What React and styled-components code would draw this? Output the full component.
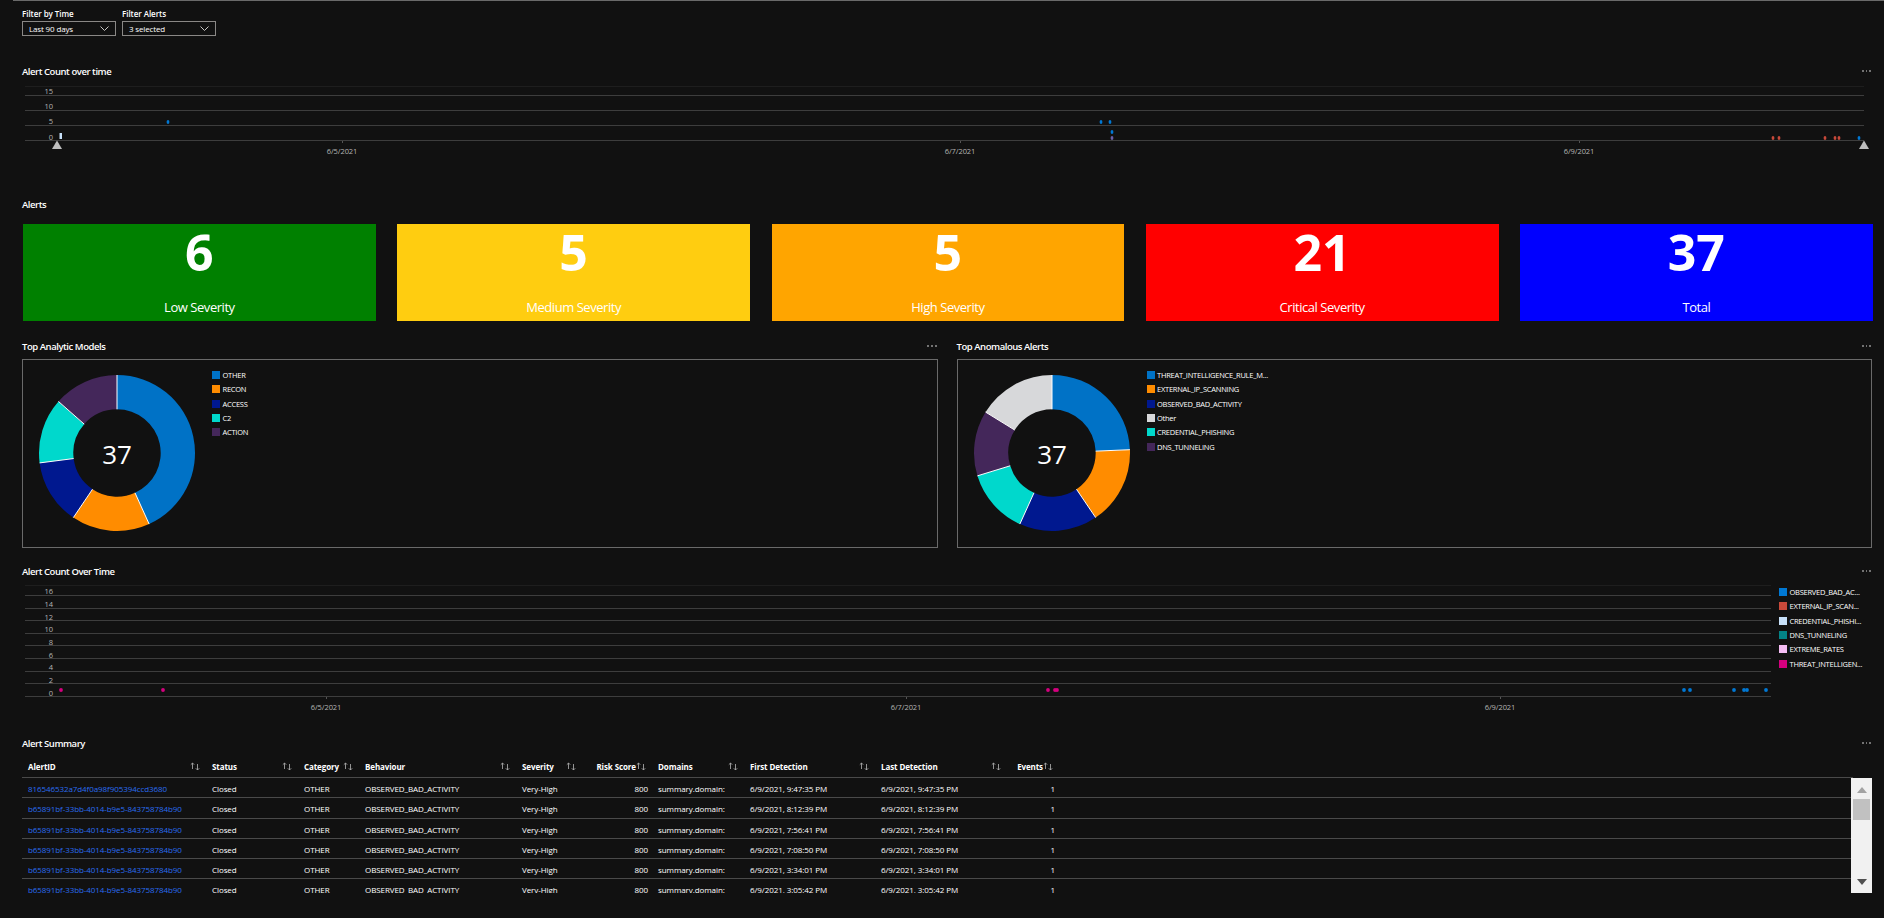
import React from "react";
import styled, { createGlobalStyle } from "styled-components";

const COLORS = {
  blue: "#0072c6",
  orange: "#ff8c00",
  navy: "#00188f",
  teal: "#00d8cc",
  purple: "#44275a",
  grey: "#d7d8da",
};

const MODELS = [
  { label: "OTHER", value: 16, color: COLORS.blue },
  { label: "RECON", value: 6, color: COLORS.orange },
  { label: "ACCESS", value: 5, color: COLORS.navy },
  { label: "C2", value: 5, color: COLORS.teal },
  { label: "ACTION", value: 5, color: COLORS.purple },
];

const ANOMALIES = [
  { label: "THREAT_INTELLIGENCE_RULE_M...", value: 9, color: COLORS.blue },
  { label: "EXTERNAL_IP_SCANNING", value: 6, color: COLORS.orange },
  { label: "OBSERVED_BAD_ACTIVITY", value: 6, color: COLORS.navy },
  { label: "CREDENTIAL_PHISHING", value: 5, color: COLORS.teal },
  { label: "DNS_TUNNELING", value: 5, color: COLORS.purple },
  { label: "Other", value: 6, color: COLORS.grey },
];

const ANOMALY_LEGEND = [0, 1, 2, 5, 3, 4].map((i) => ANOMALIES[i]);

const TIME_LEGEND = [
  { label: "OBSERVED_BAD_AC...", color: "#0078d4" },
  { label: "EXTERNAL_IP_SCAN...", color: "#c8493a" },
  { label: "CREDENTIAL_PHISHI...", color: "#c7e0f9" },
  { label: "DNS_TUNNELING", color: "#038387" },
  { label: "EXTREME_RATES", color: "#f4bdf4" },
  { label: "THREAT_INTELLIGEN...", color: "#d5007f" },
];

const CARDS = [
  { count: 6, label: "Low Severity", color: "#008000" },
  { count: 5, label: "Medium Severity", color: "#ffcd10" },
  { count: 5, label: "High Severity", color: "#ffa500" },
  { count: 21, label: "Critical Severity", color: "#ff0000" },
  { count: 37, label: "Total", color: "#0000ff" },
];

const COLUMNS = [
  { title: "AlertID" },
  { title: "Status" },
  { title: "Category" },
  { title: "Behaviour" },
  { title: "Severity" },
  { title: "Risk Score", numeric: true },
  { title: "Domains" },
  { title: "First Detection" },
  { title: "Last Detection" },
  { title: "Events", numeric: true },
];

const LONG_ID = "b65891bf-33bb-4014-b9e5-843758784b90";
const ROWS = [
  ["816546532a7d4f0a98f905394ccd3680", "9:47:35 PM"],
  [LONG_ID, "8:12:39 PM"],
  [LONG_ID, "7:56:41 PM"],
  [LONG_ID, "7:08:50 PM"],
  [LONG_ID, "3:34:01 PM"],
  [LONG_ID, "3:05:42 PM"],
];

const TOP_CHART = {
  box: [22, 84, 1850, 76],
  right: 1864,
  lines: [95, 110, 125, 140],
  faint: 86,
  dot: [1.4, 1.9],
  ticks: [
    ["15", 91],
    ["10", 106],
    ["5", 121],
    ["0", 136.5],
  ],
  dates: [
    [342, 150.5, "6/5/2021"],
    [960, 150.5, "6/7/2021"],
    [1579, 150.5, "6/9/2021"],
  ],
  dots: [
    [168, 122, "#0078d4"],
    [1101, 122, "#0078d4"],
    [1110, 122, "#0078d4"],
    [1112, 132, "#0078d4"],
    [1112, 138, "#6b5fa8"],
    [1773, 138, "#c8493a"],
    [1779, 138, "#c8493a"],
    [1825, 138, "#c8493a"],
    [1835, 138, "#c8493a"],
    [1839, 138, "#c8493a"],
    [1859, 138, "#0078d4"],
  ],
  handles: [57, 1864],
};

const BOTTOM_CHART = {
  box: [22, 584, 1750, 132],
  right: 1771,
  lines: [595, 608, 620, 633, 645, 658, 671, 683, 696],
  faint: 585,
  dot: [1.9, 1.9],
  ticks: [
    ["16", 591],
    ["14", 604],
    ["12", 617],
    ["10", 629],
    ["8", 642],
    ["6", 655],
    ["4", 667],
    ["2", 679.5],
    ["0", 692.5],
  ],
  dates: [
    [326, 706.5, "6/5/2021"],
    [906, 706.5, "6/7/2021"],
    [1500, 706.5, "6/9/2021"],
  ],
  dots: [
    [61, 690, "#d5007f"],
    [163, 690, "#d5007f"],
    [1048, 690, "#d5007f"],
    [1055, 690, "#d5007f"],
    [1057, 690, "#d5007f"],
    [1684, 690, "#0078d4"],
    [1690, 690, "#0078d4"],
    [1734, 690, "#0078d4"],
    [1744, 690, "#0078d4"],
    [1747, 690, "#0078d4"],
    [1766, 690, "#0078d4"],
  ],
  handles: [],
};

const polar = (r, turn) => {
  const a = turn * 2 * Math.PI;
  return [80 + r * Math.sin(a), 80 - r * Math.cos(a)];
};

const Donut = ({ slices }) => {
  const total = slices.reduce((sum, s) => sum + s.value, 0);
  let run = 0;
  const parts = slices.map((s) => {
    const from = run / total;
    run += s.value;
    const to = run / total;
    const big = to - from > 0.5 ? 1 : 0;
    const [x1, y1] = polar(78, from);
    const [x2, y2] = polar(78, to);
    const [x3, y3] = polar(43.7, to);
    const [x4, y4] = polar(43.7, from);
    return {
      color: s.color,
      from,
      d: `M${x1} ${y1}A78 78 0 ${big} 1 ${x2} ${y2}L${x3} ${y3}A43.7 43.7 0 ${big} 0 ${x4} ${y4}Z`,
    };
  });
  return (
    <DonutSvg width="160" height="160" viewBox="0 0 160 160">
      {parts.map((p) => (
        <path key={p.from} d={p.d} fill={p.color} />
      ))}
      {parts.map((p) => {
        const [x1, y1] = polar(43.7, p.from);
        const [x2, y2] = polar(78, p.from);
        return <line key={p.from} x1={x1} y1={y1} x2={x2} y2={y2} stroke="#fff" strokeWidth="1" />;
      })}
      <DonutTotal x="80" y="81" textAnchor="middle" dominantBaseline="central">
        {total}
      </DonutTotal>
    </DonutSvg>
  );
};

const TimeChart = ({ data }) => {
  const axis = data.lines[data.lines.length - 1];
  return (
    <ChartSvg width={data.box[2]} height={data.box[3]} viewBox={data.box.join(" ")}>
      <line x1="25" x2={data.right} y1={data.faint + 0.5} y2={data.faint + 0.5} stroke="#1e1e1e" />
      {data.lines.map((y) => (
        <line key={y} x1="25" x2={data.right} y1={y + 0.5} y2={y + 0.5} stroke="#3d3d3d" />
      ))}
      {data.ticks.map(([label, y]) => (
        <AxisText key={label} x="53" y={y} textAnchor="end" dominantBaseline="central">
          {label}
        </AxisText>
      ))}
      {data.dates.map(([x, y, label]) => (
        <g key={label}>
          <line x1={x + 0.5} x2={x + 0.5} y1={axis + 1} y2={axis + 3} stroke="#555" />
          <AxisText x={x} y={y} textAnchor="middle" dominantBaseline="central">
            {label}
          </AxisText>
        </g>
      ))}
      {data.dots.map(([x, y, color]) => (
        <ellipse key={`${x}-${y}`} cx={x} cy={y} rx={data.dot[0]} ry={data.dot[1]} fill={color} />
      ))}
      {data.handles.map((x) => (
        <polygon key={x} points={`${x},140.5 ${x - 5},149 ${x + 5},149`} fill="#bdbdbd" />
      ))}
      {data.handles.length > 0 && <rect x="59.5" y="133" width="2.5" height="6" fill="#c7e0f9" />}
    </ChartSvg>
  );
};

const SortArrows = () => (
  <SortIcon width="10" height="9" viewBox="0 0 10 9">
    <path d="M2.5 7V1M.8 2.7 2.5 1l1.7 1.7" />
    <path d="M7.5 2v6M5.8 6.3 7.5 8l1.7-1.7" />
  </SortIcon>
);

const More = () => (
  <MoreDots>
    <i />
    <i />
    <i />
  </MoreDots>
);

const Title = ({ children, more = true }) => (
  <TitleRow>
    <TitleText>{children}</TitleText>
    {more && <More />}
  </TitleRow>
);

const Legend = ({ items }) => (
  <LegendList>
    {items.map((item) => (
      <LegendItem key={item.label}>
        <Swatch $color={item.color} />
        {item.label}
      </LegendItem>
    ))}
  </LegendList>
);

const Filter = ({ label, value }) => (
  <FilterBlock>
    <FilterLabel>{label}</FilterLabel>
    <SelectBox>
      {value}
      <svg width="9" height="5" viewBox="0 0 9 5" fill="none" stroke="#c8c6c4">
        <path d="M.5.5l4 4 4-4" />
      </svg>
    </SelectBox>
  </FilterBlock>
);

const App = () => (
  <Page>
    <GlobalStyle />
    <TopRule />
    <Filters>
      <Filter label="Filter by Time" value="Last 90 days" />
      <Filter label="Filter Alerts" value="3 selected" />
    </Filters>

    <Section $height={133}>
      <Title>Alert Count over time</Title>
      <TimeChart data={TOP_CHART} />
    </Section>

    <Section $height={142}>
      <Title more={false}>Alerts</Title>
      <Cards>
        {CARDS.map((card) => (
          <Card key={card.label} $color={card.color}>
            <CardCount>{card.count}</CardCount>
            <CardLabel>{card.label}</CardLabel>
          </Card>
        ))}
      </Cards>
    </Section>

    <DonutRow>
      <DonutPanel>
        <Title>Top Analytic Models</Title>
        <DonutBox>
          <Donut slices={MODELS} />
          <Legend items={MODELS} />
        </DonutBox>
      </DonutPanel>
      <DonutPanel>
        <Title>Top Anomalous Alerts</Title>
        <DonutBox>
          <Donut slices={ANOMALIES} />
          <Legend items={ANOMALY_LEGEND} />
        </DonutBox>
      </DonutPanel>
    </DonutRow>

    <Section $height={172}>
      <Title>Alert Count Over Time</Title>
      <ChartRow>
        <TimeChart data={BOTTOM_CHART} />
        <Legend items={TIME_LEGEND} />
      </ChartRow>
    </Section>

    <Section $height={182}>
      <Title>Alert Summary</Title>
      <Table>
        <HeadRow>
          {COLUMNS.map((col) => (
            <HeadCell key={col.title} $numeric={col.numeric}>
              <span>{col.title}</span>
              <SortArrows />
            </HeadCell>
          ))}
        </HeadRow>
        <TableBody>
          <Rows>
            {ROWS.map(([id, time]) => (
              <Row key={time}>
                <LinkCell>{id}</LinkCell>
                <Cell>Closed</Cell>
                <Cell>OTHER</Cell>
                <Cell>OBSERVED_BAD_ACTIVITY</Cell>
                <Cell>Very-High</Cell>
                <Cell $numeric>800</Cell>
                <Cell>summary.domain:</Cell>
                <Cell>6/9/2021, {time}</Cell>
                <Cell>6/9/2021, {time}</Cell>
                <Cell $numeric>1</Cell>
              </Row>
            ))}
          </Rows>
          <Scrollbar>
            <ScrollArrow viewBox="0 0 10 6" width="10" height="6">
              <path d="M5 0 10 6H0Z" fill="#a3a3a3" />
            </ScrollArrow>
            <ScrollThumb />
            <ScrollArrow viewBox="0 0 10 6" width="10" height="6">
              <path d="M0 0H10L5 6Z" fill="#505050" />
            </ScrollArrow>
          </Scrollbar>
        </TableBody>
      </Table>
    </Section>
  </Page>
);

const GlobalStyle = createGlobalStyle`
  html, body {
    margin: 0;
    background: #111111;
  }
`;

const Page = styled.div`
  width: 1884px;
  height: 918px;
  overflow: hidden;
  background: #111111;
  color: #ffffff;
  font-family: "Open Sans", "Noto Sans", sans-serif;
  font-size: 8px;
`;

const TopRule = styled.div`
  height: 1px;
  margin-left: 13px;
  background: #6a6a6a;
`;

const Filters = styled.div`
  display: flex;
  gap: 6px;
  height: 56px;
  padding: 7px 0 0 22px;
`;

const FilterBlock = styled.div`
  display: flex;
  flex-direction: column;
  gap: 1px;
  width: 94px;
`;

const FilterLabel = styled.div`
  font-size: 8px;
  font-weight: 600;
  letter-spacing: -0.05px;
  line-height: 12px;
`;

const SelectBox = styled.div`
  display: flex;
  align-items: center;
  justify-content: space-between;
  box-sizing: border-box;
  height: 15px;
  padding: 0 6px;
  border: 1px solid #8a8886;
  font-size: 8px;
  font-weight: 500;
  letter-spacing: -0.15px;
`;

const Section = styled.section`
  height: ${({ $height }) => $height}px;
  padding: 0 12px 0 22px;
`;

const TitleRow = styled.div`
  display: flex;
  align-items: center;
  justify-content: space-between;
  box-sizing: border-box;
  height: 16px;
  padding: 0 1px 2px 0;
`;

const TitleText = styled.h2`
  margin: 0;
  font-size: 9.5px;
  font-weight: 600;
  letter-spacing: -0.45px;
`;

const MoreDots = styled.div`
  display: flex;
  gap: 2px;

  i {
    width: 1.7px;
    height: 2px;
    background: #737373;
  }
`;

const ChartSvg = styled.svg`
  display: block;
  flex: none;
  margin-top: 4px;
`;

const AxisText = styled.text`
  font-size: 7.5px;
  letter-spacing: -0.1px;
  fill: #b5b5b5;
`;

const Cards = styled.div`
  display: flex;
  gap: 21.5px;
  margin: 11px 0 0 1px;
`;

const Card = styled.div`
  display: flex;
  flex: none;
  flex-direction: column;
  align-items: center;
  width: 352.75px;
  height: 97px;
  background: ${({ $color }) => $color};
`;

const CardCount = styled.div`
  font-size: 50px;
  font-weight: 700;
  line-height: 56px;
`;

const CardLabel = styled.div`
  margin-top: auto;
  padding-bottom: 5px;
  font-size: 13px;
  letter-spacing: -0.45px;
  line-height: 18px;
`;

const DonutRow = styled.div`
  display: flex;
  gap: 19px;
  height: 225px;
  padding: 0 12px 0 22px;
`;

const DonutPanel = styled.div`
  flex: 1;
`;

const DonutBox = styled.div`
  display: flex;
  align-items: flex-start;
  box-sizing: border-box;
  height: 189px;
  margin-top: 4px;
  padding: 8px 0 0 14px;
  border: 1px solid #6a6a6a;
`;

const DonutSvg = styled.svg`
  flex: none;
  margin: 5px 15px 0 0;
`;

const DonutTotal = styled.text`
  font-size: 26px;
  font-weight: 500;
  fill: #ffffff;
`;

const LegendList = styled.div`
  display: flex;
  flex-direction: column;
`;

const LegendItem = styled.div`
  display: flex;
  align-items: center;
  gap: 2.5px;
  height: 14.3px;
  font-size: 7.5px;
  font-weight: 500;
  letter-spacing: -0.25px;
  white-space: nowrap;
`;

const Swatch = styled.span`
  width: 8px;
  height: 8px;
  background: ${({ $color }) => $color};
`;

const ChartRow = styled.div`
  display: flex;
  gap: 7px;

  ${LegendList} {
    margin-top: 5px;
  }
`;

const Table = styled.div`
  margin-top: 5px;
`;

const COLUMN_TEMPLATE = "184px 92px 61px 157px 66px 70px 92px 131px 132px 52px";

const HeadRow = styled.div`
  display: grid;
  grid-template-columns: ${COLUMN_TEMPLATE};
  box-sizing: border-box;
  width: 1831px;
  height: 21px;
  padding-bottom: 1px;
  border-bottom: 1px solid #4a4a4a;
`;

const HeadCell = styled.div`
  display: flex;
  align-items: center;
  justify-content: ${({ $numeric }) => ($numeric ? "flex-end" : "space-between")};
  padding: 0 6px;
  font-size: 8px;
  font-weight: 700;
  letter-spacing: -0.1px;
  white-space: nowrap;
`;

const SortIcon = styled.svg`
  flex: none;
  fill: none;
  stroke: #b5b5b5;
  stroke-width: 0.8;
`;

const TableBody = styled.div`
  display: flex;
  height: 115px;
  overflow: hidden;
`;

const Rows = styled.div`
  width: 1831px;
`;

const Row = styled.div`
  display: grid;
  grid-template-columns: ${COLUMN_TEMPLATE};
  box-sizing: border-box;
  height: 20.25px;
  border-bottom: 1px solid #4a4a4a;
`;

const Cell = styled.div`
  overflow: hidden;
  padding: ${({ $numeric }) => ($numeric ? "0 4px 0 0" : "0 0 0 6px")};
  font-size: 8px;
  font-weight: 500;
  letter-spacing: -0.08px;
  line-height: 22px;
  text-align: ${({ $numeric }) => ($numeric ? "right" : "left")};
  white-space: nowrap;
`;

const LinkCell = styled(Cell)`
  color: #2a6cf0;
`;

const Scrollbar = styled.div`
  display: flex;
  flex: none;
  flex-direction: column;
  align-items: center;
  box-sizing: border-box;
  width: 21px;
  padding-top: 9px;
  background: #f1f1f1;
`;

const ScrollThumb = styled.div`
  flex: none;
  width: 17px;
  height: 21px;
  margin: 6px 0 59px;
  background: #c1c1c1;
`;

const ScrollArrow = styled.svg`
  flex: none;
`;

export default App;
